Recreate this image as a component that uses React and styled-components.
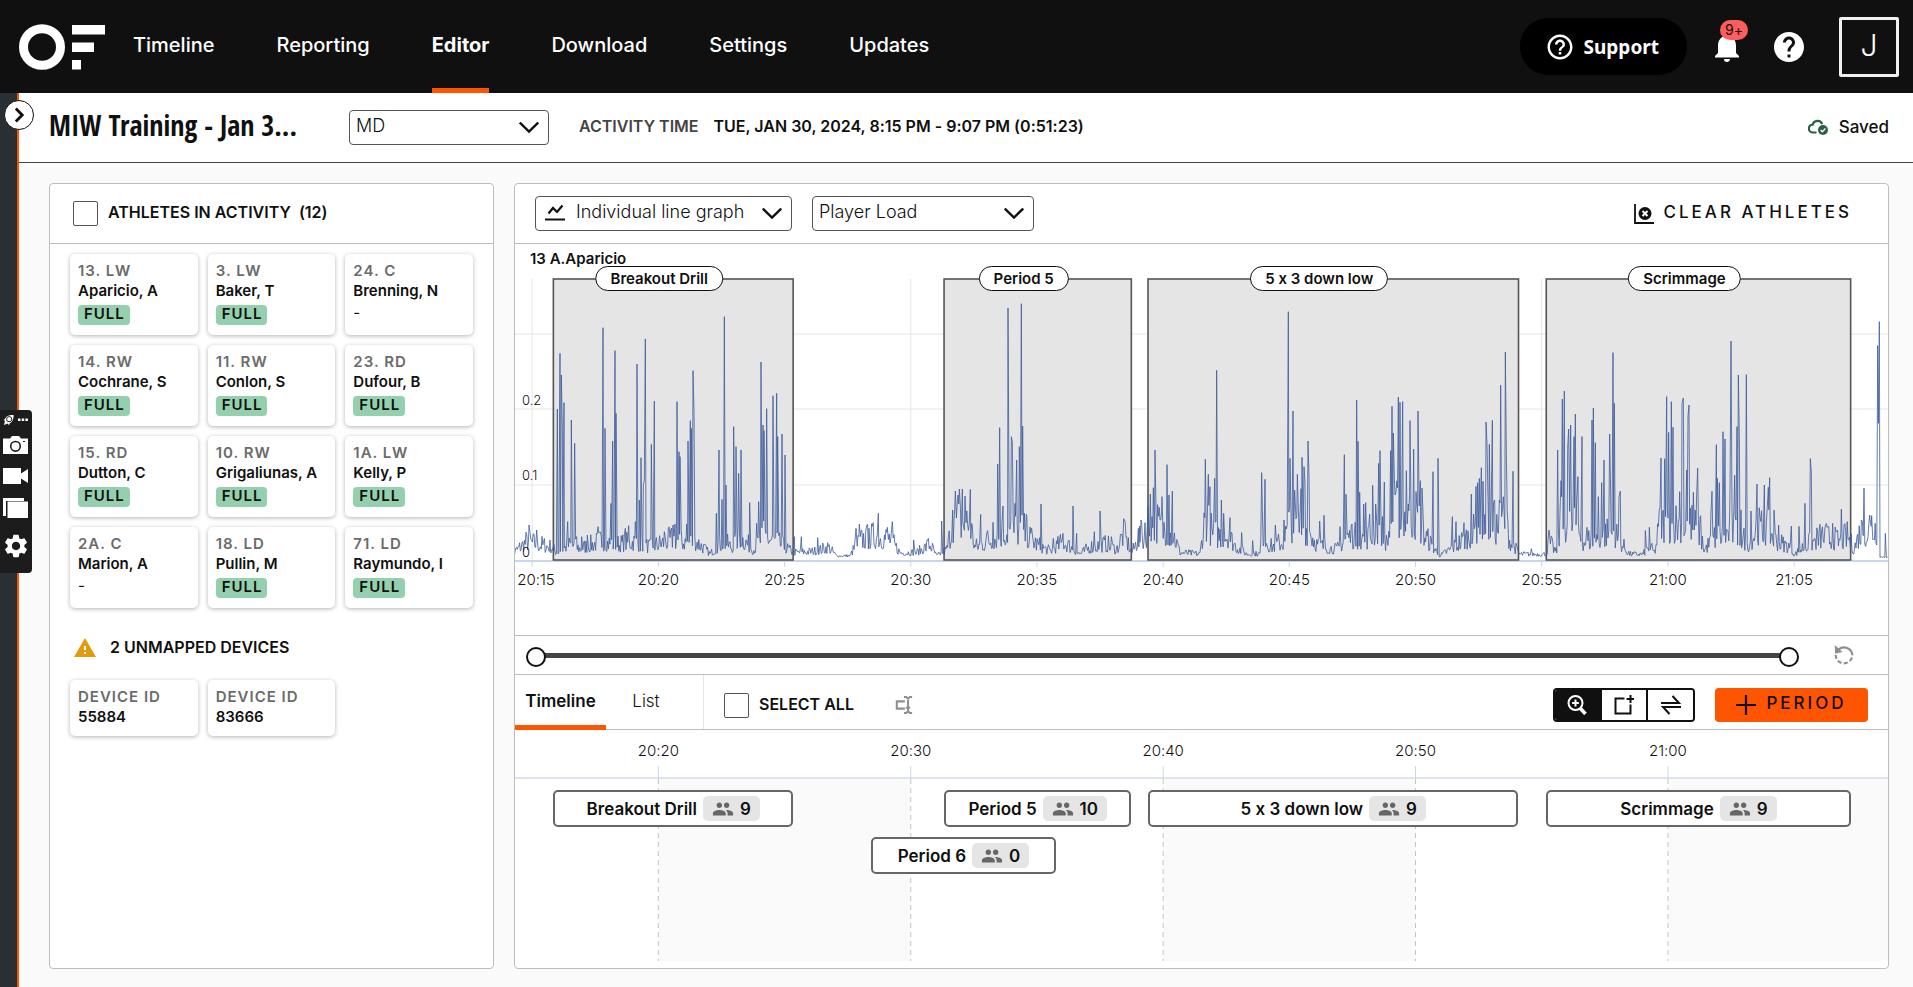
import React from "react";
import styled, { createGlobalStyle, css } from "styled-components";
import { MdHelp, MdHelpOutline, MdNotifications, MdPeople, MdSettings, MdWarning } from "react-icons/md";

const GlobalStyle = createGlobalStyle`
  *, *::before, *::after { box-sizing: border-box; }
  body {
    margin: 0;
    background: #fafafa;
    color: #101010;
    font-family: Inter, "Liberation Sans", sans-serif;
    font-size: 15px;
    font-feature-settings: "calt" 0;
    line-height: 20px;
  }
  button, select, input { font: inherit; font-feature-settings: inherit; color: inherit; }
  button { cursor: pointer; }
`;

const colors = {
  ink: "#101010",
  accent: "#ff5500",
  line: "#bdbdbd",
  grid: "#e5e5e5",
  axis: "#ccd6eb",
  series: "#3f5b9b",
};

/* ---------- data ---------- */

const NAV = ["Timeline", "Reporting", "Editor", "Download", "Settings", "Updates"];

const ATHLETES = [
  { tag: "13. LW", name: "Aparicio, A", full: true },
  { tag: "3. LW", name: "Baker, T", full: true },
  { tag: "24. C", name: "Brenning, N", full: false },
  { tag: "14. RW", name: "Cochrane, S", full: true },
  { tag: "11. RW", name: "Conlon, S", full: true },
  { tag: "23. RD", name: "Dufour, B", full: true },
  { tag: "15. RD", name: "Dutton, C", full: true },
  { tag: "10. RW", name: "Grigaliunas, A", full: true },
  { tag: "1A. LW", name: "Kelly, P", full: true },
  { tag: "2A. C", name: "Marion, A", full: false },
  { tag: "18. LD", name: "Pullin, M", full: true },
  { tag: "71. LD", name: "Raymundo, I", full: true },
];

const DEVICES = ["55884", "83666"];

/* Times are minutes after 20:00. */
const START = 14.32;
const SPAN = 54.4;
const PERIODS = [
  { name: "Breakout Drill", from: 15.84, to: 25.34, count: 9, row: 0 },
  { name: "Period 5", from: 31.32, to: 38.74, count: 10, row: 0 },
  { name: "5 x 3 down low", from: 39.4, to: 54.08, count: 9, row: 0 },
  { name: "Scrimmage", from: 55.18, to: 67.24, count: 9, row: 0 },
  { name: "Period 6", from: 28.43, to: 35.75, count: 0, row: 1 },
];

const pct = (minute) => `${((minute - START) / SPAN) * 100}%`;
const span = (minutes) => `${(minutes / SPAN) * 100}%`;
const clock = (minute) =>
  `${20 + Math.floor(minute / 60)}:${String(minute % 60).padStart(2, "0")}`;

/* Player load samples: the peaks of each stretch and the level of the signal between them. */
const LOAD = [
  {
    offset: -15,
    peaks: [[57,105],[80,90],[142,453],[150,620],[154,555],[157,395],[162,472],[173,115],[184,420],[194,350],[200,70],[215,70],[232,75],[264,100],[279,697],[285,395],[303,170],[308,357],[315,628],[318,440],[346,95],[356,103],[376,115],[381,588],[388,180],[393,307],[400,225],[403,240],[406,663],[424,347],[433,477],[463,85],[489,105],[495,108],[501,475],[507,325],[510,310],[530,108],[534,357],[541,418],[544,395],[549,568],[552,445],[619,140],[627,330],[636,182],[643,730],[648,225],[671,400],[678,340],[686,260],[693,330],[719,172],[740,110],[746,175],[753,594],[759,405],[762,388],[770,454],[789,493],[800,500],[803,370],[816,378],[825,315],[853,70],[874,70],[923,67]],
    level: [[0,10],[50,60],[70,55],[125,40],[140,20],[180,50],[210,35],[270,60],[330,50],[370,60],[420,40],[490,70],[520,60],[560,60],[600,15],[640,60],[665,40],[690,80],[730,30],[760,80],[800,60],[850,20],[920,25],[955,40],[980,8],[1019,8]],
  },
  {
    offset: 1005,
    peaks: [[18,95],[28,108],[47,85],[57,95],[85,140],[112,98],[127,115],[191,60],[235,65],[275,117],[308,150],[316,207],[324,195],[328,213],[337,213],[345,192],[361,212],[392,137],[413,88],[429,113],[443,288],[449,397],[459,162],[474,756],[484,370],[487,355],[495,170],[500,300],[508,340],[514,769],[518,402],[529,137],[542,80],[573,168],[610,65],[639,80],[669,162],[680,80],[733,85],[750,147],[784,70],[822,122],[865,95]],
    level: [[0,8],[20,50],[40,70],[85,80],[120,70],[150,20],[200,20],[240,50],[260,8],[290,30],[310,130],[360,130],[375,40],[410,60],[440,80],[470,100],[520,100],[560,50],[600,25],[640,60],[690,15],[720,40],[770,50],[800,30],[820,90],[845,20],[869,80]],
  },
  {
    offset: 1875,
    peaks: [[3,120],[15,112],[31,198],[40,217],[45,330],[66,190],[81,286],[87,195],[97,207],[196,302],[205,257],[210,220],[224,245],[230,569],[244,180],[251,140],[270,127],[305,82],[338,58],[365,262],[375,242],[406,105],[432,120],[445,745],[450,305],[459,447],[464,210],[472,257],[483,214],[486,308],[492,280],[495,232],[504,357],[507,255],[539,117],[552,134],[600,100],[613,316],[618,197],[636,108],[650,480],[654,356],[659,203],[671,168],[677,172],[689,137],[698,224],[707,168],[716,290],[720,328],[733,234],[752,328],[756,461],[760,381],[765,195],[775,489],[780,473],[788,475],[799,268],[805,168],[810,418],[821,333],[834,447],[841,238],[846,216],[879,265],[894,305],[937,130],[948,115],[972,112],[994,198],[1008,221],[1013,232],[1018,245],[1024,277],[1029,236],[1038,414],[1041,350],[1048,347],[1057,419],[1064,180],[1078,180],[1082,525],[1090,190],[1096,624],[1099,325],[1119,266]],
    level: [[0,80],[16,60],[25,140],[100,90],[120,20],[180,15],[195,150],[220,80],[260,90],[290,40],[320,15],[360,15],[365,110],[390,40],[430,60],[450,130],[510,100],[530,50],[590,30],[620,80],[680,70],[720,120],[740,50],[760,170],[830,150],[860,70],[900,8],[940,40],[1000,90],[1020,150],[1070,110],[1095,150],[1110,60],[1139,15]],
  },
  {
    offset: 2994,
    peaks: [[55,34],[108,90],[134,330],[141,145],[144,238],[148,483],[154,507],[164,335],[167,393],[173,405],[183,370],[187,438],[195,250],[207,370],[222,98],[237,420],[241,456],[247,352],[256,190],[266,232],[273,300],[290,378],[293,195],[300,622],[304,470],[318,190],[322,207],[397,88],[409,98],[441,157],[444,306],[455,304],[461,490],[467,383],[475,475],[480,398],[500,205],[507,470],[511,486],[521,270],[525,433],[528,465],[541,203],[551,195],[554,276],[563,133],[594,147],[597,206],[610,346],[613,245],[619,232],[630,385],[636,363],[651,206],[654,657],[665,254],[672,400],[676,555],[679,366],[684,150],[700,556],[714,147],[732,228],[754,225],[766,218],[770,247],[783,150],[797,105],[835,102],[858,101],[876,170],[892,304],[895,262],[937,102],[959,110],[985,153],[1045,120],[1053,216],[1070,135],[1076,133],[1094,643],[1096,410],[1099,715],[1117,80]],
    level: [[21,14],[100,14],[108,60],[130,20],[145,130],[190,130],[210,60],[250,70],[300,100],[320,60],[350,14],[390,14],[410,40],[425,20],[440,120],[530,130],[560,90],[575,30],[600,70],[660,100],[710,50],[730,110],[770,100],[790,60],[830,40],[845,12],[870,40],[930,80],[980,60],[1005,80],[1022,30],[1040,90],[1090,110],[1101,4],[1125,4]],
  },
];

function loadPath() {
  let seed = 7;
  const random = () => {
    seed = (seed * 16807) % 2147483647;
    return seed / 2147483647;
  };
  const points = [];
  LOAD.forEach(({ offset, peaks, level }) => {
    let k = 0;
    for (let x = level[0][0]; x <= level[level.length - 1][0]; x += 2.4) {
      while (k < level.length - 2 && x > level[k + 1][0]) k += 1;
      const [x0, l0] = level[k];
      const [x1, l1] = level[k + 1];
      const height = l0 + ((l1 - l0) * (x - x0)) / (x1 - x0);
      if (peaks.every(([p]) => Math.abs(p - x) > 1.2)) {
        points.push([x + offset, 6 + height * (0.35 + 1.1 * random() ** 1.4)]);
      }
    }
    peaks.forEach(([x, height]) => points.push([x + offset, height]));
  });
  points.sort((a, b) => a[0] - b[0]);
  return "M" + points.map(([x, h]) => `${x.toFixed(1)} ${(846 - h).toFixed(1)}`).join("L");
}

const LOAD_PATH = loadPath();

/* ---------- top bar ---------- */

const Page = styled.div`
  display: flex;
  flex-direction: column;
  min-height: 100vh;
`;

const TopBar = styled.header`
  display: flex;
  align-items: center;
  height: 93px;
  padding: 0 14px 0 19px;
  background: ${colors.ink};
  color: #fff;
`;

const Nav = styled.nav`
  display: flex;
  align-self: stretch;
  gap: 62px;
  margin-left: 28px;
`;

const NavLink = styled.a`
  display: flex;
  align-items: center;
  padding: 2px 0 ${(p) => (p.$active ? 0 : 5)}px;
  border-bottom: ${(p) => (p.$active ? `5px solid ${colors.accent}` : 0)};
  color: #fff;
  font-size: 20px;
  font-weight: ${(p) => (p.$active ? 700 : 500)};
  text-decoration: none;
`;

const TopActions = styled.div`
  display: flex;
  align-items: center;
  margin-left: auto;
`;

const SupportButton = styled.button`
  display: flex;
  align-items: center;
  gap: 9px;
  height: 57px;
  margin-right: 22px;
  padding: 0 28px 0 25px;
  border: 0;
  border-radius: 28px;
  background: #000;
  color: #fff;
  font-family: "Noto Sans", sans-serif;
  font-size: 19px;
  font-weight: 700;
`;

const IconButton = styled.button`
  position: relative;
  display: flex;
  padding: 0;
  border: 0;
  background: none;
  color: ${(p) => p.$tone || "inherit"};
`;

const HelpButton = styled(IconButton)`
  margin-left: 26px;
`;

const BellBadge = styled.span`
  position: absolute;
  top: -9px;
  left: 11px;
  width: 28px;
  border-radius: 10px;
  background: #ff5d5d;
  color: ${colors.ink};
  font-size: 14px;
  line-height: 20px;
  text-align: center;
`;

const Avatar = styled.button`
  width: 60px;
  height: 60px;
  margin-left: 32px;
  padding: 0 0 4px;
  border: 3px solid #f0f0f0;
  border-radius: 2px;
  background: none;
  color: #fff;
  font-size: 30px;
  font-weight: 300;
`;

/* ---------- frame ---------- */

const Shell = styled.div`
  display: flex;
  flex: 1;
`;

const Rail = styled.aside`
  position: relative;
  width: 19px;
  flex: none;
  border-right: 2px solid ${colors.accent};
  background: #2a2f33;
`;

const RailToggle = styled.button`
  position: absolute;
  top: 7px;
  left: 4px;
  display: flex;
  align-items: center;
  justify-content: center;
  width: 30px;
  height: 30px;
  padding: 0;
  border: 1px solid ${colors.ink};
  border-radius: 50%;
  background: #fff;
`;

const Recorder = styled.div`
  position: fixed;
  top: 410px;
  left: 0;
  display: flex;
  flex-direction: column;
  align-items: center;
  gap: 14px;
  width: 32px;
  height: 163px;
  padding: 4px 4px 12px 3px;
  border-radius: 0 4px 4px 0;
  background: #1c1c1c;
  color: #fff;

  svg {
    flex: none;
  }
  svg:first-child {
    margin-bottom: -4px;
  }
`;

const Content = styled.main`
  display: flex;
  flex: 1;
  flex-direction: column;
  min-width: 0;
`;

const ActivityBar = styled.div`
  display: flex;
  align-items: center;
  height: 70px;
  padding: 0 24px 0 30px;
  border-bottom: 1px solid #444;
  background: #fff;
`;

const Title = styled.h1`
  width: 300px;
  margin: 0;
  padding-bottom: 6px;
  font-family: "Liberation Sans Narrow", "Open Sans Condensed", "DejaVu Sans Condensed", sans-serif;
  font-size: 28px;
  font-weight: 700;
  line-height: 36px;
  white-space: nowrap;
`;

const SelectBox = styled.label`
  position: relative;
  display: block;
  width: ${(p) => p.$width}px;

  svg {
    position: absolute;
    top: 7px;
    right: 10px;
    pointer-events: none;
  }
  svg:first-child {
    right: auto;
    left: 10px;
  }
`;

const Select = styled.select`
  width: 100%;
  height: 35px;
  padding: 0 28px 4px ${(p) => (p.$icon ? 40 : 6)}px;
  border: 1px solid #555;
  border-radius: 4px;
  background: #fff;
  appearance: none;
  font-size: 18px;
  font-weight: 300;
`;

const Caption = styled.span`
  padding-bottom: 3px;
  color: ${(p) => p.$tone || "inherit"};
  font-size: 16px;
  font-weight: 600;
  white-space: pre;
`;

const TimeInfo = styled.div`
  display: flex;
  gap: 15px;
  margin-left: 30px;
`;

const Saved = styled.div`
  display: flex;
  align-items: center;
  gap: 11px;
  margin-left: auto;
  padding-bottom: 2px;
  font-size: 17px;
  font-weight: 500;
`;

const Panels = styled.div`
  display: grid;
  flex: 1;
  grid-template-columns: 445px minmax(0, 1fr);
  gap: 20px;
  padding: 20px 24px 18px 30px;
`;

const Panel = styled.section`
  display: flex;
  flex-direction: column;
  min-width: 0;
  border: 1px solid ${colors.line};
  border-radius: 4px;
  background: #fff;
`;

const PanelHead = styled.div`
  display: flex;
  align-items: center;
  gap: 20px;
  height: 60px;
  padding: 0 ${(p) => (p.$wide ? 36 : 23)}px 0 ${(p) => (p.$wide ? 20 : 23)}px;
  border-bottom: 1px solid ${colors.line};
`;

const CheckLabel = styled.label`
  display: flex;
  align-items: center;
  gap: 10px;
`;

const CheckBox = styled.input.attrs({ type: "checkbox" })`
  width: 25px;
  height: 25px;
  margin: 0;
  border: 1px solid #555;
  border-radius: 2px;
  background: #fff;
  appearance: none;

  &:checked {
    background: ${colors.ink};
  }
`;

/* ---------- athletes ---------- */

const CardGrid = styled.div`
  display: grid;
  grid-template-columns: repeat(3, 1fr);
  gap: 10px;
  padding: 10px 20px 0;
`;

const Card = styled.button`
  display: flex;
  flex-direction: column;
  align-items: flex-start;
  min-height: ${(p) => (p.$short ? 56 : 81)}px;
  padding: 7px 8px;
  border: 0;
  border-radius: 5px;
  background: #fff;
  box-shadow: 0 1px 4px rgba(0, 0, 0, 0.3);
  font-size: 15px;
  font-weight: 600;
  white-space: nowrap;
`;

const CardTag = styled.span`
  color: #6b6b6b;
  letter-spacing: 1px;
`;

const FullBadge = styled.span`
  margin-top: 4px;
  padding: 0 5px 2px 6px;
  border-radius: 4px;
  background: #95d0ae;
  line-height: 18px;
  letter-spacing: 1px;
`;

const NoBadge = styled.span`
  margin-top: 2px;
  font-weight: 400;
`;

const Unmapped = styled.div`
  display: flex;
  align-items: center;
  gap: 13px;
  margin: 28px 23px 10px;
`;

/* ---------- chart ---------- */

const ClearButton = styled.button`
  display: flex;
  align-items: center;
  gap: 10px;
  margin-left: auto;
  padding: 0;
  border: 0;
  background: none;
  font-size: 17px;
  font-weight: 500;
  letter-spacing: 3px;

  span {
    padding-bottom: 4px;
  }
`;

const ChartArea = styled.div`
  position: relative;
  height: 392px;
  border-bottom: 1px solid ${colors.line};
`;

const SeriesName = styled.div`
  position: absolute;
  top: 5px;
  left: 15px;
  font-weight: 600;
`;

const Plot = styled.svg`
  display: block;
  width: 100%;
  height: 100%;
  overflow: hidden;

  text {
    fill: ${colors.ink};
    font-size: 15px;
    font-weight: 300;
    text-anchor: middle;
  }

  text.value {
    font-size: 13px;
    text-anchor: start;
  }
`;

const PeriodPill = styled.span`
  position: absolute;
  top: 22px;
  left: ${(p) => p.$left};
  margin-left: -14px;
  padding: 0 14px;
  border: 1px solid ${colors.ink};
  border-radius: 13px;
  background: #fff;
  font-weight: 600;
  line-height: 23px;
  white-space: nowrap;
  transform: translateX(-50%);
`;

const RangeRow = styled.div`
  display: flex;
  align-items: center;
  gap: 35px;
  height: 39px;
  padding: 0 34px 0 11px;
  border-bottom: 1px solid ${colors.line};
`;

const RangeTrack = styled.div`
  position: relative;
  flex: 1;
  height: 20px;

  &::before {
    content: "";
    position: absolute;
    inset: 8px 10px 7px;
    background: #444;
  }
`;

const thumb = css`
  width: 20px;
  height: 20px;
  border: 2px solid ${colors.ink};
  border-radius: 50%;
  background: #fff;
  appearance: none;
  pointer-events: auto;
`;

const Range = styled.input.attrs({ type: "range", min: 0, max: 100 })`
  position: absolute;
  inset: 2px 0 0;
  width: 100%;
  height: 20px;
  margin: 0;
  background: none;
  appearance: none;
  pointer-events: none;

  &::-webkit-slider-thumb {
    ${thumb}
  }
  &::-moz-range-thumb {
    ${thumb}
  }
`;

/* ---------- timeline ---------- */

const TabRow = styled.div`
  display: flex;
  align-items: stretch;
  height: 55px;
  border-bottom: 1px solid ${colors.line};
`;

const Tabs = styled.div`
  display: flex;
  width: 189px;
  border-right: 1px solid ${colors.grid};
`;

const Tab = styled.button`
  width: ${(p) => (p.$active ? 91 : 80)}px;
  margin-bottom: -1px;
  padding: ${(p) => (p.$active ? "2px 0 0" : "2px 0 5px")};
  border: 0;
  border-bottom: ${(p) => (p.$active ? `5px solid ${colors.accent}` : 0)};
  background: none;
  font-size: 17px;
  font-weight: ${(p) => (p.$active ? 600 : 300)};
`;

const Tools = styled.div`
  display: flex;
  flex: 1;
  align-items: center;
  padding: 6px 20px 0;
`;

const SelectAll = styled.div`
  display: flex;
  align-items: center;
  gap: 41px;
`;

const ModeGroup = styled.div`
  display: flex;
  width: 142px;
  height: 34px;
  margin: 0 20px 0 auto;
  overflow: hidden;
  border: 2px solid ${colors.ink};
  border-radius: 4px;
`;

const ModeButton = styled.button`
  display: flex;
  flex: 1;
  align-items: center;
  justify-content: center;
  padding: 0;
  border: 0;
  border-left: ${(p) => (p.$first ? 0 : `2px solid ${colors.ink}`)};
  background: ${(p) => (p.$active ? colors.ink : "#fff")};
  color: ${(p) => (p.$active ? "#fff" : colors.ink)};
`;

const AddPeriod = styled.button`
  display: flex;
  align-items: center;
  justify-content: center;
  gap: 10px;
  width: 153px;
  height: 34px;
  padding: 0;
  border: 0;
  border-radius: 4px;
  background: ${colors.accent};
  font-size: 17px;
  font-weight: 500;
  letter-spacing: 3px;

  span {
    padding-bottom: 4px;
  }
`;

const Board = styled.div`
  position: relative;
  flex: 1;
  min-height: 231px;
  margin-bottom: 7px;
  overflow: hidden;
`;

const BoardGrid = styled(Plot)`
  position: absolute;
  inset: 0;
`;

const PeriodBar = styled.button`
  position: absolute;
  top: ${(p) => 60 + p.$row * 47}px;
  left: ${(p) => p.$left};
  display: flex;
  align-items: center;
  justify-content: center;
  gap: 6px;
  width: ${(p) => p.$width};
  height: 37px;
  padding: 0;
  border: 2px solid #666;
  border-radius: 5px;
  background: #fff;
  font-size: 17px;
  font-weight: 600;
  white-space: nowrap;
`;

const CountBadge = styled.span`
  display: flex;
  align-items: center;
  gap: 6px;
  height: 25px;
  padding: 0 9px;
  border-radius: 5px;
  background: #e5e5e5;

  svg {
    color: #666;
  }
`;

/* ---------- drawings ---------- */

const Logo = () => (
  <svg width="86" height="46" viewBox="0 0 86 46" role="img" aria-label="OF">
    <ellipse cx="23" cy="23" rx="18.5" ry="18.3" fill="none" stroke="#fff" strokeWidth="9" />
    <path d="M53 1h33v9.500H53zM53 18.500h22v9.500H53zM53 36h9v9.500h-9z" fill="#fff" />
  </svg>
);

const Stroke = ({ size = 20, width = 2, children }) => (
  <svg width={size} height={size} viewBox="0 0 20 20" fill="none" stroke="currentColor" strokeWidth={width} aria-hidden="true">
    {children}
  </svg>
);

const SelectArrow = () => (
  <Stroke width={2.4}>
    <path d="M.8 5.500 10 14.500l9.200-9" />
  </Stroke>
);

const GraphIcon = () => (
  <Stroke>
    <path d="M3.500 10.500 8 5l4 4 5.500-6.500" strokeWidth="2.200" />
    <path d="M0 16.500h20" />
  </Stroke>
);

const CloudCheck = () => (
  <svg width="20" height="16" viewBox="0 0 20 16" aria-hidden="true">
    <path d="M8.500 13.500H5a3.900 3.900 0 0 1-.3-7.900A5 5 0 0 1 14.200 5" fill="none" stroke="#2a5f47" strokeWidth="2.200" />
    <circle cx="15" cy="11" r="5" fill="#2a5f47" />
    <path d="m12.600 11 1.800 1.800 3-3.300" fill="none" stroke="#fff" strokeWidth="1.300" />
  </svg>
);

const ClearIcon = () => (
  <svg width="20" height="20" viewBox="0 0 20 20" fill="none" aria-hidden="true">
    <path d="M1 0v19h19" stroke="#101010" strokeWidth="1.800" />
    <circle cx="11" cy="9.500" r="6.500" fill="#101010" />
    <path d="m8.500 7 5 5m0-5-5 5" stroke="#fff" strokeWidth="2" />
  </svg>
);

const ResetIcon = () => (
  <Stroke width={2.2}>
    <path d="M4.500 4.500A8.300 8.300 0 0 1 18.300 10" />
    <path d="M18.300 10A8.300 8.300 0 0 1 1.700 10" strokeDasharray="4.200 2.300" strokeDashoffset="-2.500" />
    <path d="m.8 0 .3 8.800 7.400-1.800Z" fill="currentColor" stroke="none" />
  </Stroke>
);

const RenameIcon = () => (
  <Stroke size={18} width={2.3}>
    <path d="M11 6H2v8h9M10 1.200h2.500L14.500 3l2-1.800H19M10 18.800h2.500l2-1.800 2 1.800H19M14.500 2v16M12 13h5" />
  </Stroke>
);

const ZoomIcon = () => (
  <Stroke>
    <circle cx="8.500" cy="8" r="7" />
    <path d="M8.500 4.600v6.800M5.100 8h6.800" />
    <path d="m13 13 5.500 6" strokeWidth="3.500" />
  </Stroke>
);

const AddBoxIcon = () => (
  <Stroke>
    <path d="M10.500 3.500H1.500v15h15v-9M16.500 0v8M12.500 4h8" />
  </Stroke>
);

const SwapIcon = () => (
  <Stroke>
    <path d="M0 8h18L11.500 1M20 12H2l6.500 7" />
  </Stroke>
);

const PlusIcon = () => (
  <Stroke width={2.2}>
    <path d="M10 0v20M0 10h20" />
  </Stroke>
);

const RecorderTools = () => (
  <Recorder>
    <svg width="25" height="12" viewBox="0 0 25 12" fill="currentColor" aria-hidden="true">
      <path d="M10.500 1C5.500.5 2.500 3 2 5L.5 6l1.500.8L1 11l3.500-1.500L6 11l.8-1.800C9.500 8 11 4.500 10.500 1Z" />
      <circle cx="6.200" cy="5.200" r="2.600" fill="none" stroke="#1c1c1c" />
      <path d="M15 4.500h2.500V7H15zM18.700 4.500h2.500V7h-2.500zM22.400 4.500h2.500V7h-2.500z" />
    </svg>
    <svg width="25" height="18" viewBox="0 0 25 18" aria-hidden="true">
      <path d="M0 2.500h7L9 0h7l2 2.500h7V18H0z" fill="#fff" />
      <circle cx="12.500" cy="10.300" r="4.800" fill="none" stroke="#1c1c1c" strokeWidth="1.600" />
      <path d="M20 5.500h2" stroke="#1c1c1c" />
    </svg>
    <svg width="25" height="16" viewBox="0 0 25 16" fill="#fff" aria-hidden="true">
      <path d="M0 0h18v5.500L25 1v14l-7-4.500V16H0z" />
    </svg>
    <svg width="25" height="20" viewBox="0 0 25 20" aria-hidden="true">
      <path d="M0 0h21v3H3v15H0z" fill="#fff" />
      <path d="M4.500 3.500H25V20H4.500z" fill="#fff" />
    </svg>
    <MdSettings size={28} />
  </Recorder>
);

/* ---------- sections ---------- */

function AthletePanel() {
  return (
    <Panel>
      <PanelHead>
        <CheckLabel>
          <CheckBox />
          <Caption>ATHLETES IN ACTIVITY{"  "}(12)</Caption>
        </CheckLabel>
      </PanelHead>
      <CardGrid>
        {ATHLETES.map((a) => (
          <Card key={a.tag}>
            <CardTag>{a.tag}</CardTag>
            <span>{a.name}</span>
            {a.full ? <FullBadge>FULL</FullBadge> : <NoBadge>-</NoBadge>}
          </Card>
        ))}
      </CardGrid>
      <Unmapped>
        <MdWarning size={24} color="#e39a0b" />
        <Caption>2 UNMAPPED DEVICES</Caption>
      </Unmapped>
      <CardGrid>
        {DEVICES.map((id) => (
          <Card key={id} $short>
            <CardTag>DEVICE ID</CardTag>
            <span>{id}</span>
          </Card>
        ))}
      </CardGrid>
    </Panel>
  );
}

function LoadChart() {
  const ticks = Array.from({ length: 11 }, (_, i) => 15 + i * 5);
  const shown = PERIODS.filter((p) => p.row === 0);
  return (
    <ChartArea>
      <Plot role="img" aria-label="Player load of 13 A.Aparicio">
        {[90, 165, 241].map((y) => (
          <line key={y} x1="0" x2="100%" y1={y} y2={y} stroke={colors.grid} />
        ))}
        {ticks.map((t) => (
          <line key={t} x1={pct(t)} x2={pct(t)} y1="35" y2="316" stroke={colors.grid} />
        ))}
        <line x1="0" x2="100%" y1="317" y2="317" stroke={colors.axis} strokeWidth="2" />
        {ticks.map((t) => (
          <line key={t} x1={pct(t)} x2={pct(t)} y1="317" y2="323" stroke={colors.axis} />
        ))}
        {shown.map((p) => (
          <rect key={p.name} x={pct(p.from)} width={span(p.to - p.from)} y="35" height="281" fill="#e5e5e5" stroke="#555" strokeWidth="1.600" />
        ))}
        <svg x="0" y="34" width="100%" height="282" viewBox="0 0 4119 846" preserveAspectRatio="none">
          <path d={LOAD_PATH} fill="none" stroke={colors.series} strokeOpacity="0.8" strokeLinejoin="bevel" vectorEffect="non-scaling-stroke" />
        </svg>
        <text className="value" x="7" y="161">0.2</text>
        <text className="value" x="7" y="236">0.1</text>
        <text className="value" x="7" y="313">0</text>
        {ticks.map((t, i) => (
          <text key={t} x={i ? pct(t) : 21} y="341">
            {clock(t)}
          </text>
        ))}
      </Plot>
      <SeriesName>13 A.Aparicio</SeriesName>
      {shown.map((p) => (
        <PeriodPill key={p.name} $left={pct((p.from + p.to) / 2)}>
          {p.name}
        </PeriodPill>
      ))}
    </ChartArea>
  );
}

function Timeline() {
  const ticks = [20, 30, 40, 50, 60];
  return (
    <Board>
      <BoardGrid aria-hidden="true">
        {[20, 40, 60].map((t) => (
          <rect key={t} x={pct(t)} width={span(10)} y="49" height="100%" fill="#fafafa" />
        ))}
        <line x1="0" x2="100%" y1="48" y2="48" stroke="#dde3f2" strokeWidth="2" />
        {ticks.map((t) => (
          <React.Fragment key={t}>
            <text x={pct(t)} y="26">{clock(t)}</text>
            <line x1={pct(t)} x2={pct(t)} y1="36" y2="49" stroke={colors.axis} />
            <line x1={pct(t)} x2={pct(t)} y1="49" y2="100%" stroke="#c4c4c4" strokeDasharray="5 4" />
          </React.Fragment>
        ))}
      </BoardGrid>
      {PERIODS.map((p) => (
        <PeriodBar key={p.name} $row={p.row} $left={pct(p.from)} $width={span(p.to - p.from)}>
          {p.name}
          <CountBadge>
            <MdPeople size={22} />
            {p.count}
          </CountBadge>
        </PeriodBar>
      ))}
    </Board>
  );
}

function GraphPanel() {
  return (
    <Panel>
      <PanelHead $wide>
        <SelectBox $width={257}>
          <GraphIcon />
          <Select $icon aria-label="Graph type">
            <option>Individual line graph</option>
          </Select>
          <SelectArrow />
        </SelectBox>
        <SelectBox $width={222}>
          <Select aria-label="Metric">
            <option>Player Load</option>
          </Select>
          <SelectArrow />
        </SelectBox>
        <ClearButton>
          <ClearIcon />
          <span>CLEAR ATHLETES</span>
        </ClearButton>
      </PanelHead>
      <LoadChart />
      <RangeRow>
        <RangeTrack>
          <Range aria-label="Range start" defaultValue={0} />
          <Range aria-label="Range end" defaultValue={100} />
        </RangeTrack>
        <IconButton aria-label="Reset range" $tone="#8f8f8f">
          <ResetIcon />
        </IconButton>
      </RangeRow>
      <TabRow>
        <Tabs role="tablist">
          <Tab role="tab" aria-selected="true" $active>Timeline</Tab>
          <Tab role="tab" aria-selected="false">List</Tab>
        </Tabs>
        <Tools>
          <SelectAll>
            <CheckLabel>
              <CheckBox />
              <Caption>SELECT ALL</Caption>
            </CheckLabel>
            <IconButton aria-label="Rename" $tone="#8f8f8f">
              <RenameIcon />
            </IconButton>
          </SelectAll>
          <ModeGroup>
            <ModeButton aria-label="Zoom" $active $first><ZoomIcon /></ModeButton>
            <ModeButton aria-label="Draw period"><AddBoxIcon /></ModeButton>
            <ModeButton aria-label="Swap"><SwapIcon /></ModeButton>
          </ModeGroup>
          <AddPeriod>
            <PlusIcon />
            <span>PERIOD</span>
          </AddPeriod>
        </Tools>
      </TabRow>
      <Timeline />
    </Panel>
  );
}

export default function App() {
  return (
    <Page>
      <GlobalStyle />
      <TopBar>
        <Logo />
        <Nav>
          {NAV.map((item) => (
            <NavLink key={item} href="#" $active={item === "Editor"}>
              {item}
            </NavLink>
          ))}
        </Nav>
        <TopActions>
          <SupportButton>
            <MdHelpOutline size={30} />
            Support
          </SupportButton>
          <IconButton aria-label="Notifications">
            <MdNotifications size={36} />
            <BellBadge>9+</BellBadge>
          </IconButton>
          <HelpButton aria-label="Help">
            <MdHelp size={36} />
          </HelpButton>
          <Avatar>J</Avatar>
        </TopActions>
      </TopBar>
      <Shell>
        <Rail>
          <RailToggle aria-label="Open sidebar">
            <Stroke size={16} width={3.5}>
              <path d="m6 2 8 8-8 8" />
            </Stroke>
          </RailToggle>
        </Rail>
        <Content>
          <ActivityBar>
            <Title>MIW Training - Jan 3...</Title>
            <SelectBox $width={200}>
              <Select aria-label="Activity tag">
                <option>MD</option>
              </Select>
              <SelectArrow />
            </SelectBox>
            <TimeInfo>
              <Caption $tone="#444">ACTIVITY TIME</Caption>
              <Caption>TUE, JAN 30, 2024, 8:15 PM - 9:07 PM (0:51:23)</Caption>
            </TimeInfo>
            <Saved>
              <CloudCheck />
              Saved
            </Saved>
          </ActivityBar>
          <Panels>
            <AthletePanel />
            <GraphPanel />
          </Panels>
        </Content>
      </Shell>
      <RecorderTools />
    </Page>
  );
}
